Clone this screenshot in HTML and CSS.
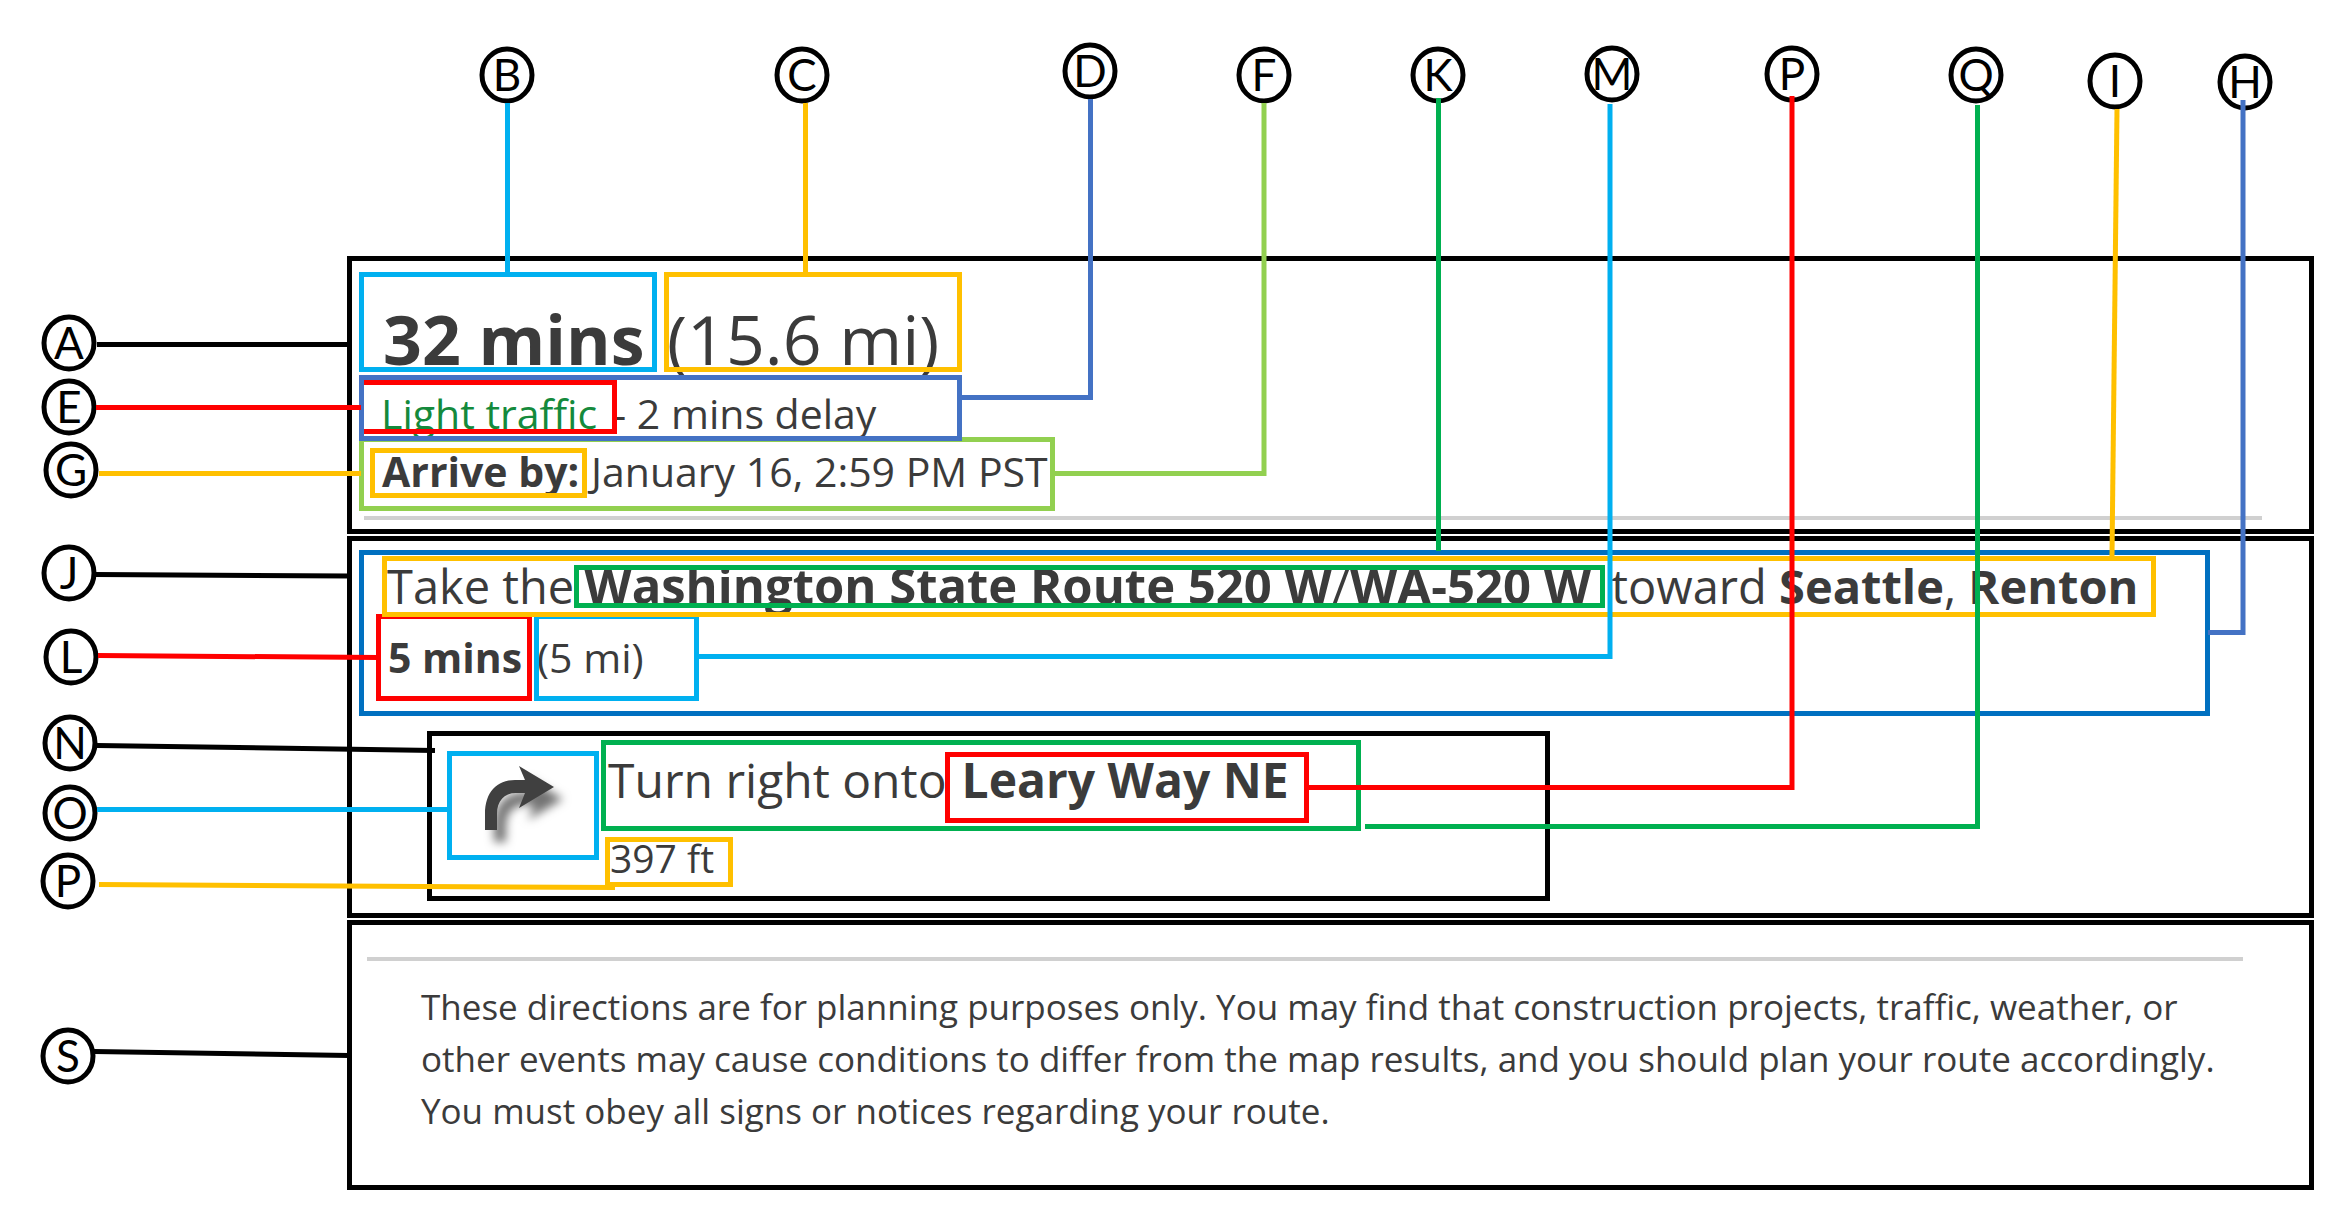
FILE: index.html
```html
<!DOCTYPE html>
<html lang="en">
<head>
<meta charset="utf-8">
<title>Route directions, annotated</title>
<link rel="stylesheet" href="styles.css">
</head>
<body>
<main class="stage">
  <section class="panel summary">
    <div class="totals">
      <strong class="mark sky total">32 mins</strong>
      <span class="mark gold total distance">(15.6 mi)</span>
    </div>
    <div class="mark indigo front traffic">
      <span class="mark red level">Light traffic</span>
      <span class="delay">- 2 mins delay</span>
    </div>
    <div class="mark lime arrival">
      <strong class="mark gold arrival-label">Arrive by:</strong>
      <span>January 16, 2:59 PM PST</span>
    </div>
    <hr class="rule">
  </section>

  <section class="panel route">
    <div class="mark blue leg">
      <div class="mark gold front instruction">
        <span>Take the</span>
        <span class="mark green road"><strong>Washington State Route 520 W</strong>/<strong>WA-520 W</strong></span>
        <span class="toward">toward <strong>Seattle</strong>, <strong>Renton</strong></span>
      </div>
      <div class="leg-totals">
        <strong class="mark red leg-time">5 mins</strong>
        <span class="mark sky leg-distance">(5 mi)</span>
      </div>
    </div>
    <div class="mark black step">
      <div class="mark sky maneuver">
        <svg class="arrow" viewBox="0 0 152 109" role="img" aria-label="Turn right">
          <path d="M38 79V63C38 41 50 29 68 29H78L72 15L107 36L72 57L78 42H69C57 42 50 50 50 63V79Z"/>
        </svg>
      </div>
      <div class="step-text">
        <div class="mark green turn">
          <span>Turn right onto</span>
          <strong class="mark red street">Leary Way NE</strong>
        </div>
        <span class="mark gold step-distance">397 ft</span>
      </div>
    </div>
  </section>

  <section class="panel notice">
    <hr class="rule">
    <p class="disclaimer">These directions are for planning purposes only. You may find that construction projects, traffic, weather, or other events may cause conditions to differ from the map results, and you should plan your route accordingly. You must obey all signs or notices regarding your route.</p>
  </section>

  <svg class="callouts" aria-label="Callouts">
    <g class="badges">
      <g><ellipse cx="507" cy="75" rx="25" ry="26"/><text x="507" y="91">B</text></g>
      <g><ellipse cx="802" cy="75" rx="25" ry="26"/><text x="802" y="91">C</text></g>
      <g><ellipse cx="1090" cy="71" rx="25" ry="26"/><text x="1090" y="87">D</text></g>
      <g><ellipse cx="1264" cy="75" rx="25" ry="26"/><text x="1264" y="91">F</text></g>
      <g><ellipse cx="1438" cy="75" rx="25" ry="26"/><text x="1438" y="91">K</text></g>
      <g><ellipse cx="1612" cy="74" rx="25" ry="26"/><text x="1612" y="90">M</text></g>
      <g><ellipse cx="1792" cy="74" rx="25" ry="26"/><text x="1792" y="90">P</text></g>
      <g><ellipse cx="1976" cy="75" rx="25" ry="26"/><text x="1976" y="91">Q</text></g>
      <g><ellipse cx="2115" cy="81" rx="25" ry="26"/><text x="2115" y="97">I</text></g>
      <g><ellipse cx="2245" cy="82" rx="25" ry="26"/><text x="2245" y="98">H</text></g>
      <g><ellipse cx="69" cy="343" rx="25" ry="26"/><text x="69" y="359">A</text></g>
      <g><ellipse cx="69" cy="407" rx="25" ry="26"/><text x="69" y="423">E</text></g>
      <g><ellipse cx="71" cy="470" rx="25" ry="26"/><text x="71" y="486">G</text></g>
      <g><ellipse cx="69" cy="573" rx="25" ry="26"/><text x="69" y="589">J</text></g>
      <g><ellipse cx="71" cy="657" rx="25" ry="26"/><text x="71" y="673">L</text></g>
      <g><ellipse cx="70" cy="743" rx="25" ry="26"/><text x="70" y="759">N</text></g>
      <g><ellipse cx="70" cy="813" rx="25" ry="26"/><text x="70" y="829">O</text></g>
      <g><ellipse cx="68" cy="881" rx="25" ry="26"/><text x="68" y="897">P</text></g>
      <g><ellipse cx="68" cy="1056" rx="25" ry="26"/><text x="68" y="1072">S</text></g>
    </g>
    <g class="lines">
      <path class="black" d="M97 344.5H349"/>
      <path class="red" d="M96 407.5H361"/>
      <path class="gold" d="M99 473.5H361"/>
      <path class="black" d="M96 574.5L349 576"/>
      <path class="red" d="M98 655.5L378 657.5"/>
      <path class="black" d="M97 745.5L435 750.5"/>
      <path class="sky" d="M97 809.5H449"/>
      <path class="gold" d="M99 884.5L615 887.5"/>
      <path class="black" d="M94 1051.5L349 1055.5"/>
      <path class="sky" d="M507.5 103V274"/>
      <path class="gold" d="M805.5 103V274"/>
      <path class="indigo" d="M1090.5 99V397.5H960"/>
      <path class="lime" d="M1264 103V473.5H1053"/>
      <path class="green" d="M1438.5 98V551"/>
      <path class="sky" d="M1610 104V656.5H697"/>
      <path class="red" d="M1792 96V787.5H1307"/>
      <path class="green" d="M1977.5 105V826.5H1365"/>
      <path class="gold" d="M2117 109L2112 556"/>
      <path class="indigo" d="M2243 100V632.5H2208"/>
    </g>
  </svg>
</main>
</body>
</html>
```
FILE: styles.css
```css
:root {
  --black: #000;
  --sky: #00b0f0;
  --gold: #ffc000;
  --red: #f00;
  --green: #00b050;
  --lime: #92d050;
  --indigo: #4472c4;
  --blue: #0070c0;
}

* { box-sizing: border-box; }

body {
  margin: 0;
  background: #fff;
  color: #3b3b3b;
  font-family: "Open Sans", "Noto Sans", sans-serif;
  font-size: 41px;
  white-space: nowrap;
}

.black { --tone: var(--black); }
.sky { --tone: var(--sky); }
.gold { --tone: var(--gold); }
.red { --tone: var(--red); }
.green { --tone: var(--green); }
.lime { --tone: var(--lime); }
.indigo { --tone: var(--indigo); }
.blue { --tone: var(--blue); }

.stage {
  position: relative;
  display: flex;
  flex-direction: column;
  gap: 2px;
  padding: 256px 33px 19px 347px;
}

.panel { border: 5px solid var(--black); }

/* Coloured frame drawn over the text it marks */
.mark { position: relative; flex: none; }
.mark::after {
  content: "";
  position: absolute;
  inset: 0;
  border: 5px solid var(--tone);
  pointer-events: none;
}
.front::after { z-index: 1; }

.rule {
  height: 4px;
  margin: 0;
  border: 0;
  background: #d0d0d0;
}

/* Summary */
.summary { padding: 11px 47px 9px 7px; }
.totals { display: flex; gap: 7px; }
.total {
  width: 298px;
  padding: 33px 0 0 24px;
  font-size: 68px;
  line-height: 67px;
}
.distance { padding-left: 3px; }
.traffic {
  display: flex;
  align-items: baseline;
  width: 603px;
  height: 66px;
  margin-top: 3px;
  padding-top: 5px;
}
.level {
  width: 258px;
  padding: 12px 0 0 22px;
  line-height: 42px;
  color: #148a3c;
}
.delay { margin-left: -4px; line-height: 42px; }
.arrival {
  display: flex;
  align-items: baseline;
  width: 696px;
  height: 74px;
  margin-top: -4px;
  padding: 11px 0 0 11px;
  line-height: 46px;
}
.arrival-label {
  width: 217px;
  margin-right: 4px;
  padding: 0 0 4px 12px;
}
.summary .rule { margin: 5px 0 0 5px; }

/* Route */
.route { padding: 9px 99px 12px 7px; }
.leg { height: 166px; padding: 6px 54px 0 17px; }
.instruction {
  display: flex;
  align-items: baseline;
  height: 61px;
  margin-left: 6px;
  padding-left: 5px;
  font-size: 47px;
  line-height: 61px;
}
.road {
  width: 1031px;
  padding: 0 0 3px 10px;
  font-size: 49px;
  line-height: 40px;
}
.toward { margin-left: 6px; }
.leg-totals { display: flex; gap: 2px; margin-top: -3px; line-height: 87px; }
.leg-time { width: 156px; padding-left: 12px; }
.leg-distance { width: 165px; padding-left: 3px; }

.step {
  display: flex;
  gap: 2px;
  width: 1123px;
  height: 170px;
  margin: 15px 0 0 68px;
  padding: 9px 0 0 20px;
}
.maneuver { width: 152px; height: 109px; margin-top: 11px; }
.arrow {
  display: block;
  width: 100%;
  height: 100%;
  fill: #404040;
  filter: drop-shadow(9px 12px 5px rgb(0 0 0 / 55%));
}
.turn {
  display: flex;
  align-items: baseline;
  width: 760px;
  height: 91px;
  padding: 12px 0 0 7px;
  font-size: 48px;
  line-height: 56px;
}
.street { width: 364px; margin-left: -2px; padding: 0 0 15px 17px; }
.step-distance {
  display: block;
  width: 128px;
  margin: 6px 0 0 4px;
  padding: 0 0 8px 5px;
  font-size: 39px;
  line-height: 42px;
}

/* Notice */
.notice { padding: 32px 66px 48px 15px; }
.disclaimer {
  margin: 20px 0 0 54px;
  font-size: 35px;
  line-height: 52px;
  white-space: normal;
}

/* Callouts */
.callouts {
  position: absolute;
  inset: 0;
  z-index: 2;
  width: 100%;
  height: 100%;
  pointer-events: none;
}
.badges ellipse { fill: #fff; stroke: var(--black); stroke-width: 5px; }
.badges text {
  fill: var(--black);
  font-family: Lato, sans-serif;
  font-size: 44px;
  text-anchor: middle;
}
.lines path { fill: none; stroke: var(--tone); stroke-width: 5px; }
```
